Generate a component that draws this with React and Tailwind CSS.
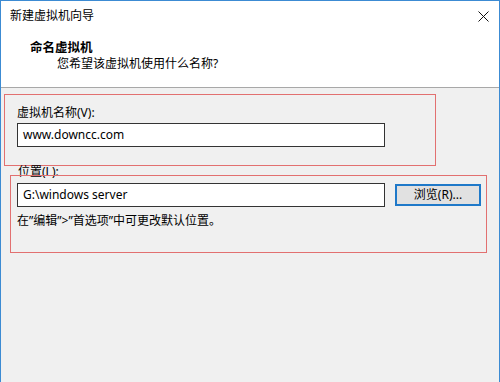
export default function App() {
  return (
    <div className="h-[382px] w-[500px] overflow-hidden border-x border-t border-[#3c8bd3] bg-[#f0f0f0] font-['Noto_Sans','Noto_Sans_CJK_SC',sans-serif] text-[12px] text-black">
      {/* 标题栏 */}
      <div className="flex h-[30px] items-center justify-between bg-white pl-[9px] pr-[10px]">
        <span className="leading-[16px]">新建虚拟机向导</span>
        <svg className="h-[11px] w-[11px]" viewBox="0 0 11 11" stroke="#111" strokeWidth={1} fill="none">
          <path d="M0.5 0.5L10.5 10.5M10.5 0.5L0.5 10.5" />
        </svg>
      </div>

      {/* 页头 */}
      <div className="h-[57px] border-b border-[#a8a8a8] bg-white pt-[9px]">
        <p className="pl-[29px] text-[12.5px] font-bold leading-[15px]">命名虚拟机</p>
        <p className="mt-[1px] pl-[56px] leading-[15px]">您希望该虚拟机使用什么名称?</p>
      </div>

      {/* 名称 */}
      <div className="ml-[3px] mt-[6px] h-[72px] w-[432px] border border-[#e27070] pl-[12px] pt-[10px]">
        <p className="leading-[16px]">虚拟机名称(V):</p>
        <div className="mt-[2px] flex h-[24px] w-[368px] items-center border border-[#333] bg-white pl-[5px]">
          www.downcc.com
        </div>
      </div>

      {/* 位置 */}
      <p className="-mb-[5px] -mt-[2px] pl-[17px] leading-[16px]">位置(L):</p>
      <div className="relative ml-[9px] h-[78px] w-[477px] border border-[#e27070] pl-[6px] pt-[7px]">
        <div className="flex">
          <div className="flex h-[24px] w-[368px] items-center border border-[#333] bg-white pl-[5px]">
            G:\windows server
          </div>
          <button className="ml-[10px] mt-[1px] flex h-[22px] w-[86px] items-center justify-center border-2 border-[#1f79c9] bg-[#e1e1e1] leading-none">
            浏览(R)...
          </button>
        </div>
        <p className="mt-[6px] leading-[16px]">在”编辑”&gt;”首选项”中可更改默认位置。</p>
      </div>
    </div>
  )
}
